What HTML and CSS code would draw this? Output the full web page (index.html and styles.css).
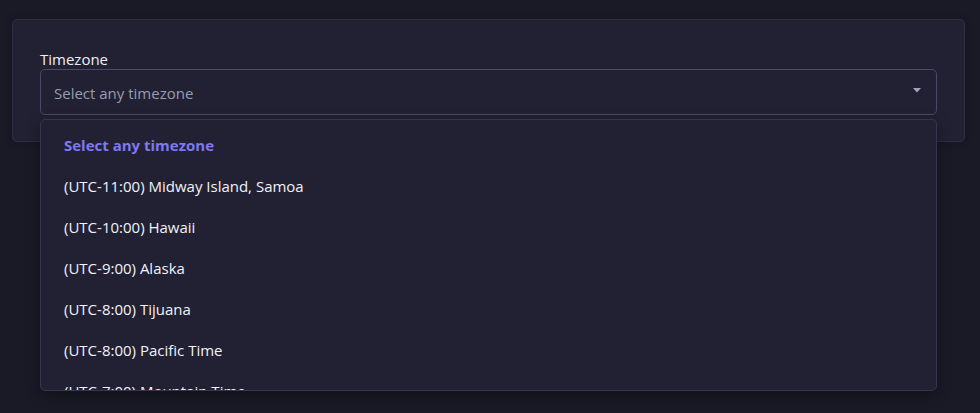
FILE: index.html
```html
<!DOCTYPE html>
<html>
<head>
<meta charset="utf-8">
<link rel="stylesheet" href="styles.css">
</head>
<body>
<div class="page">
  <div class="card">
    <label class="label">Timezone</label>
    <div class="select-wrap">
      <div class="select">
        <span class="placeholder">Select any timezone</span>
        <svg class="caret" width="8" height="5" viewBox="0 0 8 5"><path d="M0 0H8L4 4.5Z" fill="#a3a3ba"/></svg>
      </div>
      <div class="menu">
        <div class="item active">Select any timezone</div>
        <div class="item">(UTC-11:00) Midway Island, Samoa</div>
        <div class="item">(UTC-10:00) Hawaii</div>
        <div class="item">(UTC-9:00) Alaska</div>
        <div class="item">(UTC-8:00) Tijuana</div>
        <div class="item">(UTC-8:00) Pacific Time</div>
        <div class="item">(UTC-7:00) Mountain Time</div>
      </div>
    </div>
  </div>
</div>
</body>
</html>
```
FILE: styles.css
```css
html, body {
  margin: 0;
  padding: 0;
  background: #1a1a27;
  height: 100%;
  overflow: hidden;
}
body {
  font-family: "Open Sans", "Noto Sans", sans-serif;
  color: #e8e8f0;
}
.page {
  padding: 19px 15px 0 12px;
}
.card {
  background: #212133;
  border: 1px solid #2e2e45;
  border-radius: 5px;
  padding: 29px 27px 26px 27px;
  box-shadow: 0 0 8px rgba(0,0,0,0.2);
}
.label {
  display: block;
  font-size: 15px;
  line-height: 20px;
  color: #eeeef5;
}
.select-wrap {
  position: relative;
}
.select {
  box-sizing: border-box;
  height: 46px;
  border: 1px solid #4a4a68;
  border-radius: 5px;
  background: #212133;
  display: flex;
  align-items: center;
  justify-content: space-between;
  padding: 1px 15px 0 13px;
}
.placeholder {
  font-size: 15px;
  color: #9a9ab0;
}
.caret {
  display: block;
  margin-top: -4px;
}
.menu {
  box-sizing: border-box;
  position: absolute;
  left: 0;
  right: 0;
  top: 50px;
  height: 272px;
  overflow: hidden;
  background: #212133;
  border: 1px solid #35354f;
  border-radius: 5px;
  box-shadow: 0 4px 14px rgba(0,0,0,0.35);
  padding-top: 5px;
  z-index: 2;
}
.item {
  height: 41px;
  line-height: 41px;
  padding-left: 23px;
  font-size: 15px;
  color: #f2f2f8;
  white-space: nowrap;
}
.item.active {
  color: #7f78f0;
  font-weight: 700;
}
```
